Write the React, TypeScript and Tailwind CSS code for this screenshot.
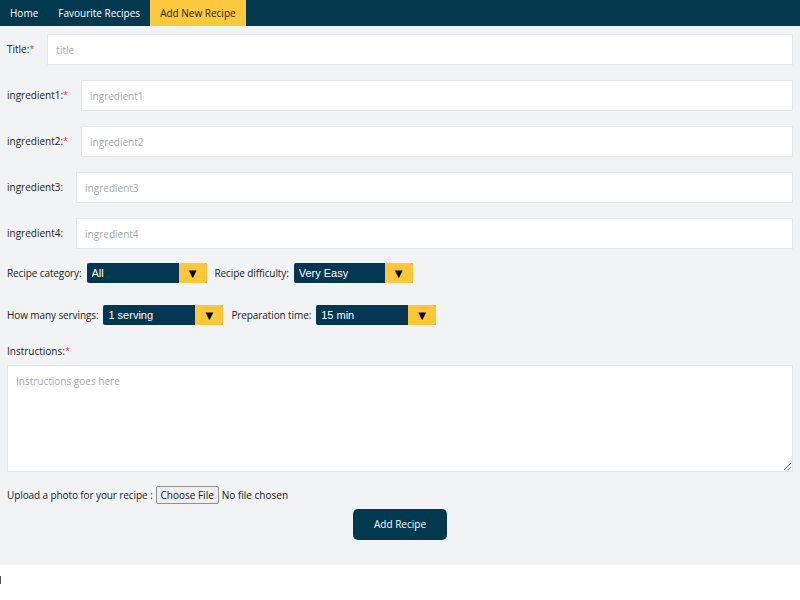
import { ChangeEvent, useState } from "react";

type Opt = { label: string; width: string; options: string[] };

function Field({ label, required, placeholder }: { label: string; required?: boolean; placeholder: string }) {
  return (
    <div className="flex items-center h-[31px]">
      <label className="text-[10px] text-[#222] whitespace-nowrap mr-[13px]">
        {label}
        {required && <span className="text-red-500 text-[9px] align-top">*</span>}
      </label>
      <input
        type="text"
        placeholder={placeholder}
        className="flex-1 h-full bg-white border border-[#e4e6ea] px-2 text-[10px] outline-none placeholder:text-[#a3a8b0]"
      />
    </div>
  );
}

function Dropdown({ label, width, options }: Opt) {
  const [value, setValue] = useState(options[0]);
  return (
    <div className="flex items-center">
      <span className="text-[10px] text-[#222] mr-[5px] tracking-[-0.1px]">{label}</span>
      <div className={`relative h-[20px] ${width} rounded-[2px] overflow-hidden flex bg-[#033651]`}>
        <select
          value={value}
          onChange={(e: ChangeEvent<HTMLSelectElement>) => setValue(e.target.value)}
          className="appearance-none flex-1 bg-transparent text-white text-[11px] pl-[5px] outline-none font-['Liberation_Sans',Arial,sans-serif]"
        >
          {options.map((o) => (
            <option key={o} className="text-black">{o}</option>
          ))}
        </select>
        <div className="pointer-events-none w-[28px] bg-[#fdc73a] flex items-center justify-center text-black text-[10px] font-['DejaVu_Sans',sans-serif]">
          ▼
        </div>
      </div>
    </div>
  );
}

export default function App() {
  return (
    <div className="font-['Open_Sans','Noto_Sans',sans-serif]">
      <div className="bg-[#f2f3f5] pb-[25px]">
        {/* nav */}
        <nav className="h-[26px] bg-[#03394f] flex text-[10px]">
          <a className="px-[10px] flex items-center text-white">Home</a>
          <a className="px-[10px] flex items-center text-white">Favourite Recipes</a>
          <a className="px-[10px] flex items-center bg-[#fcc83c] text-[#222]">Add New Recipe</a>
        </nav>

        <form className="px-[7px] pt-[8px] flex flex-col" onSubmit={(e) => e.preventDefault()}>
          <div className="flex flex-col gap-[15px]">
            <Field label="Title:" required placeholder="title" />
            <Field label="ingredient1:" required placeholder="ingredient1" />
            <Field label="ingredient2:" required placeholder="ingredient2" />
            <Field label="ingredient3:" placeholder="ingredient3" />
            <Field label="ingredient4:" placeholder="ingredient4" />
          </div>

          <div className="flex items-center gap-[8px] mt-[14px]">
            <Dropdown label="Recipe category:" width="w-[120px]" options={["All", "Breakfast", "Lunch", "Dinner", "Dessert"]} />
            <Dropdown label="Recipe difficulty:" width="w-[119px]" options={["Very Easy", "Easy", "Medium", "Hard"]} />
          </div>

          <div className="flex items-center gap-[8px] mt-[22px]">
            <Dropdown label="How many servings:" width="w-[120px]" options={["1 serving", "2 servings", "4 servings"]} />
            <Dropdown label="Preparation time:" width="w-[120px]" options={["15 min", "30 min", "1 hour"]} />
          </div>

          <label className="text-[10px] text-[#222] mt-[19px]">
            Instructions:<span className="text-red-500 text-[9px] align-top">*</span>
          </label>
          <textarea
            placeholder="Instructions goes here"
            className="mt-[6px] h-[107px] bg-white border border-[#e4e6ea] px-2 py-[8px] text-[10px] outline-none placeholder:text-[#a3a8b0]"
          />

          <div className="flex items-center mt-[14px] text-[10px] text-[#222]">
            <span className="mr-[3px] tracking-[-0.1px]">Upload a photo for your recipe :</span>
            <button type="button" className="h-[18px] px-[4px] border border-[#8f8f8f] bg-[#efefef] rounded-[2px] text-[10px] text-[#111]">
              Choose File
            </button>
            <span className="ml-[3px] text-[#111]">No file chosen</span>
          </div>

          <div className="flex justify-center mt-[5px]">
            <button type="submit" className="w-[94px] h-[31px] bg-[#03394f] text-white text-[10px] rounded-[5px]">
              Add Recipe
            </button>
          </div>
        </form>
      </div>
      <div className="ml-0 mt-[11px] w-px bg-[#555] h-[8px]" />
    </div>
  );
}
